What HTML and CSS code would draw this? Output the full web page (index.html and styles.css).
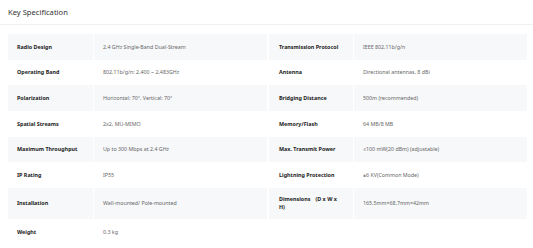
FILE: index.html
```html
<!DOCTYPE html>
<html>
<head>
<meta charset="utf-8">
<link rel="stylesheet" href="styles.css">
</head>
<body>
<div class="header"><h2 class="title">Key Specification</h2></div>
<div class="specs">
  <div class="cell label shade">Radio Design</div>
  <div class="cell value shade">2.4 GHz Single-Band Dual-Stream</div>
  <div class="cell label shade right">Transmission Protocol</div>
  <div class="cell value shade">IEEE 802.11b/g/n</div>

  <div class="cell label">Operating Band</div>
  <div class="cell value">802.11b/g/n: 2.400 ~ 2.483GHz</div>
  <div class="cell label right">Antenna</div>
  <div class="cell value">Directional antennas, 8 dBi</div>

  <div class="cell label shade">Polarization</div>
  <div class="cell value shade">Horizontal: 70°, Vertical: 70°</div>
  <div class="cell label shade right">Bridging Distance</div>
  <div class="cell value shade">500m (recommended)</div>

  <div class="cell label">Spatial Streams</div>
  <div class="cell value">2x2, MU-MIMO</div>
  <div class="cell label right">Memory/Flash</div>
  <div class="cell value">64 MB/8 MB</div>

  <div class="cell label shade">Maximum Throughput</div>
  <div class="cell value shade">Up to 300 Mbps at 2.4 GHz</div>
  <div class="cell label shade right">Max. Transmit Power</div>
  <div class="cell value shade">≤100 mW(20 dBm) (adjustable)</div>

  <div class="cell label">IP Rating</div>
  <div class="cell value">IP55</div>
  <div class="cell label right">Lightning Protection</div>
  <div class="cell value">±6 KV(Common Mode)</div>

  <div class="cell label shade">Installation</div>
  <div class="cell value shade">Wall-mounted/ Pole-mounted</div>
  <div class="cell label shade right">Dimensions　(D x W x H)</div>
  <div class="cell value shade">165.5mm×68.7mm×42mm</div>

  <div class="cell label">Weight</div>
  <div class="cell value">0.3 kg</div>
  <div class="cell label right"></div>
  <div class="cell value"></div>
</div>
</body>
</html>
```

FILE: styles.css
```css
html, body {
  margin: 0;
  padding: 0;
  background: #ffffff;
  font-family: "Noto Sans", "Open Sans", sans-serif;
}

.header {
  height: 25px;
  border-bottom: 1px solid #f0f1f3;
  display: flex;
  align-items: center;
  padding-left: 8px;
  box-sizing: border-box;
}

.title {
  margin: 0;
  font-size: 7.6px;
  font-weight: 400;
  color: #333333;
}

.specs {
  display: grid;
  grid-template-columns: 85px 173px 85px 173px;
  grid-auto-rows: minmax(25.67px, auto);
  column-gap: 1px;
  margin: 9px 0 0 8px;
}

.cell {
  display: flex;
  align-items: center;
  padding: 7px 9px;
  box-sizing: border-box;
  line-height: 8.5px;
}

.shade {
  background: #f7f8fa;
}

.right {
  margin-left: 1px;
  padding-left: 10px;
}

.label {
  font-size: 5.4px;
  font-weight: 700;
  color: #222222;
}

.value {
  font-size: 5.3px;
  color: #666666;
}
```
